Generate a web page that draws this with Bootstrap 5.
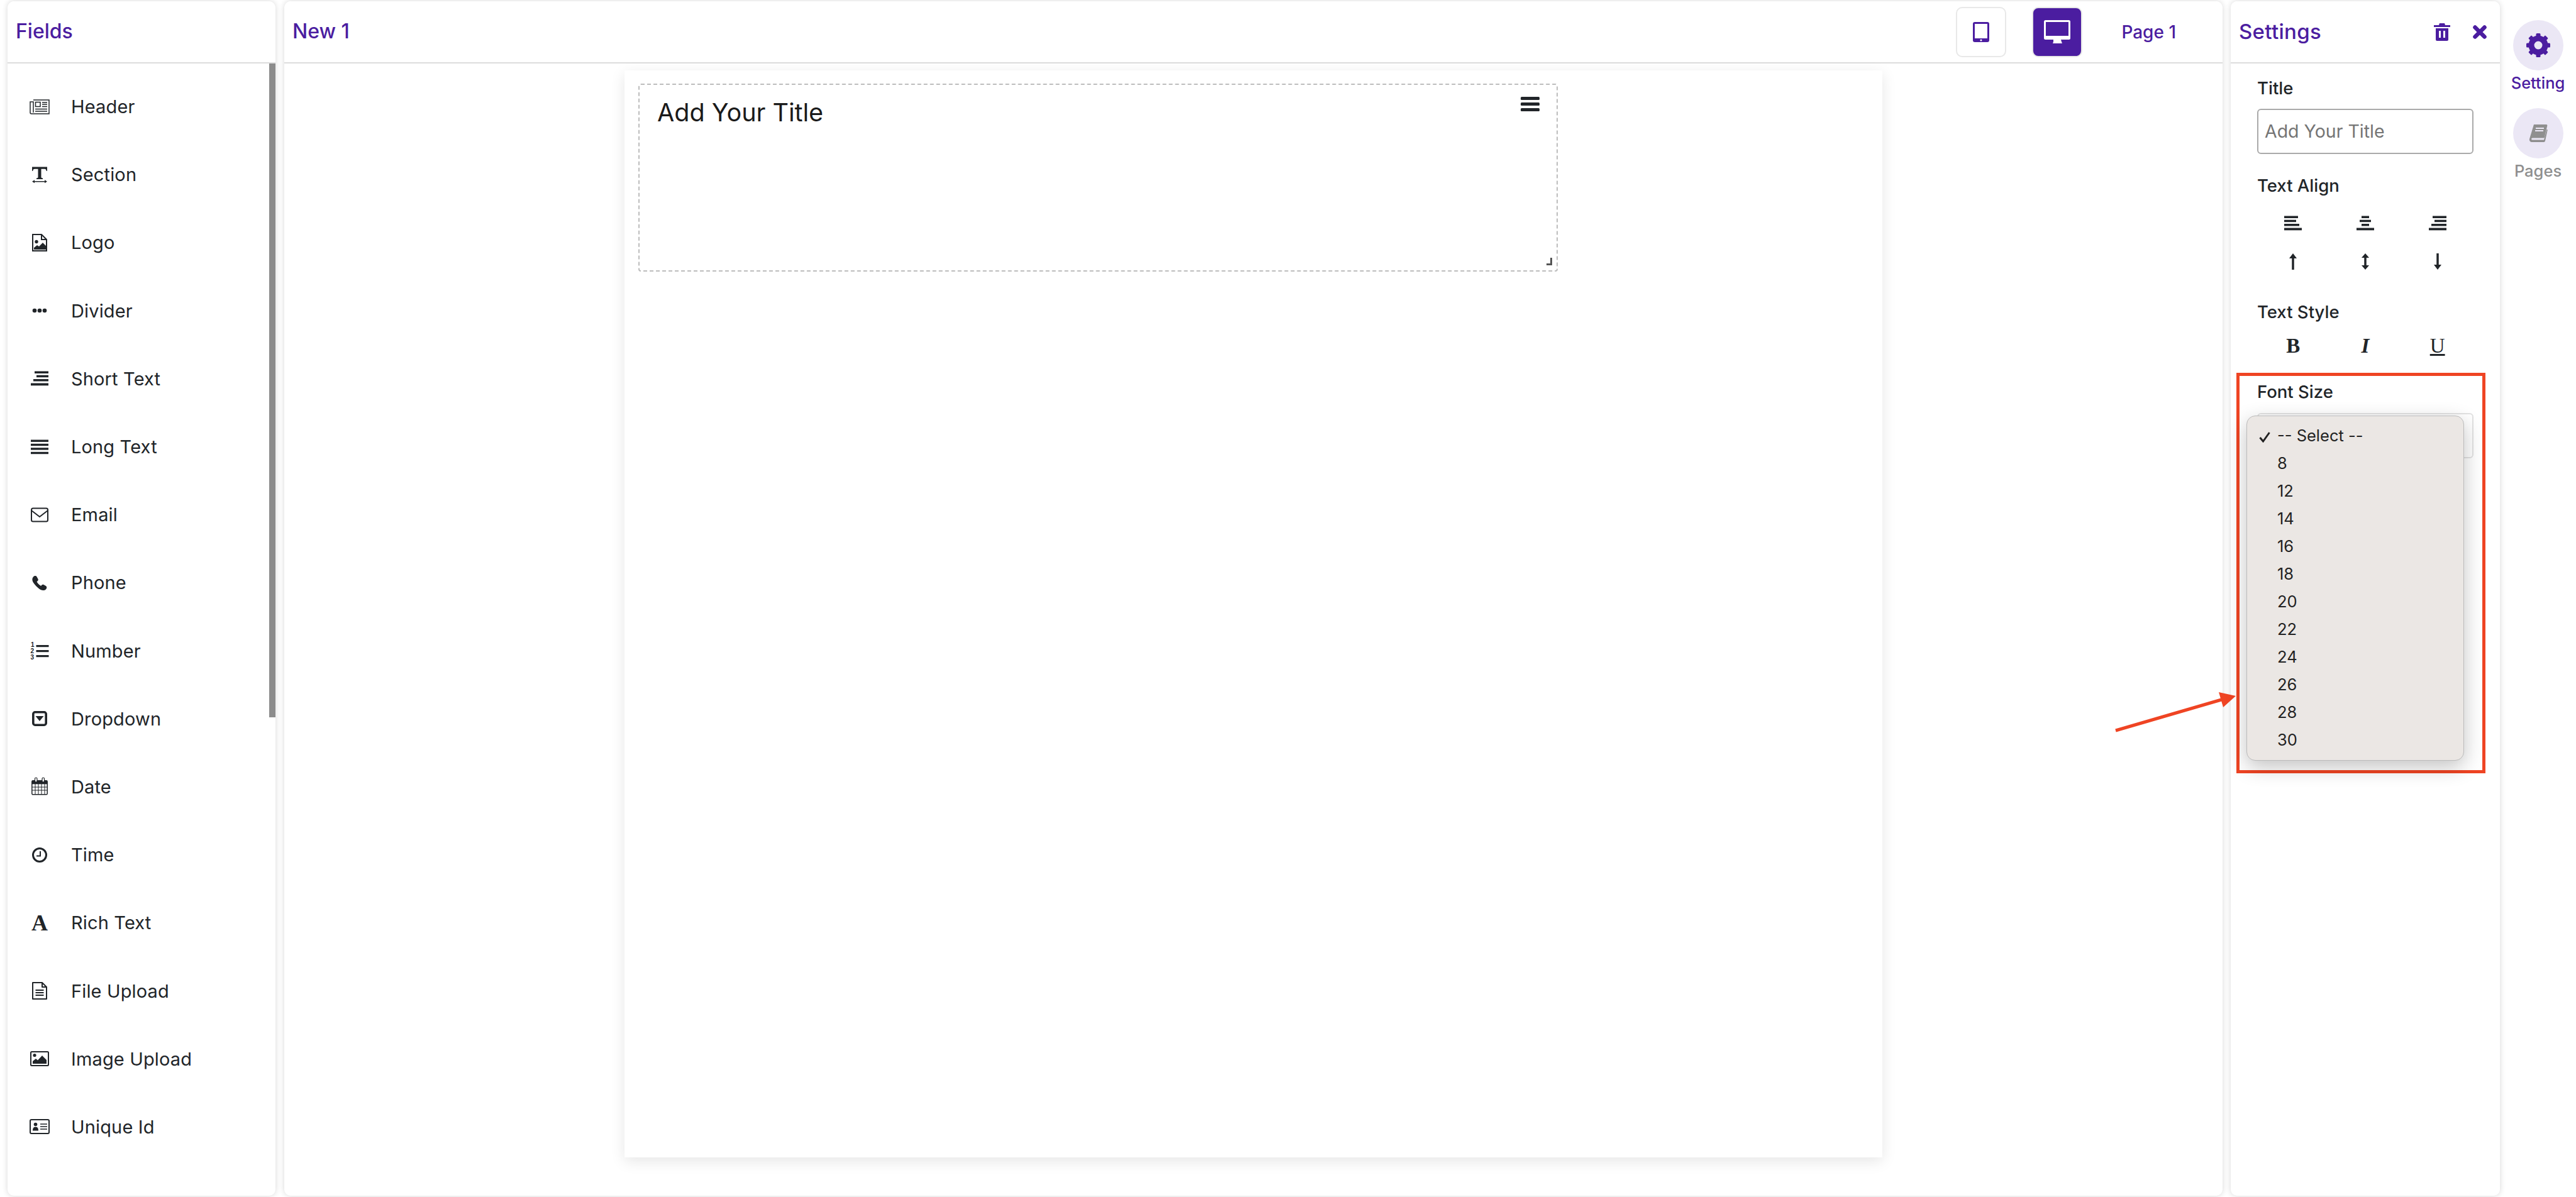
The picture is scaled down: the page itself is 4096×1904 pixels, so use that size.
<!DOCTYPE html>
<html lang="en">
<head>
  <meta charset="UTF-8" />
  <title>Form Builder</title>
  <link href="https://cdn.jsdelivr.net/npm/bootstrap@5.3.3/dist/css/bootstrap.min.css" rel="stylesheet" />
  <style>
    html, body { height: 100%; overflow: hidden; }
    body { background: #fff; color: #212529; font-family: Inter, "Noto Sans", sans-serif; }
    .builder { height: 1904px; padding: 2px 0 2px 12px; }
    .panel.card { flex: none; border: 0; border-radius: 10px; box-shadow: 0 0 10px rgba(0,0,0,.16); overflow: hidden; }
    .panel-fields { width: 426px; }
    .panel-canvas { width: 3082px; margin-left: 14px; }
    .panel-settings { width: 428px; margin-left: 13px; overflow: visible !important; }
    .panel .card-header { background: #fff; padding: 0 13px; border-bottom: 2px solid #ddd; box-sizing: content-box; height: 97px; border-radius: 10px 10px 0 0; }
    .panel-title { color: #4b1da0; font-size: 32px; font-weight: 500; margin: 0; }
    .panel-settings .panel-title { font-size: 33px; letter-spacing: .3px; }

    .field-list { padding-top: 15px; }
    .field-row { height: 108.2px; padding-left: 35px; gap: 34px; font-size: 29px; letter-spacing: .15px; line-height: 1; padding-bottom: 1px; }
    .field-row svg, .field-row .glyph-a { width: 32px; height: 32px; flex: none; }
    .glyph-a { font: bold 36px/32px "Liberation Serif", serif; text-align: center; }
    .fake-scroll { top: 0; right: 0; width: 10px; height: 1040px; background: #8c8c8c; }

    .device-btn { width: 80px; height: 80px; border: 2px solid #e8e8e8; border-radius: 10px; padding: 0; background: #fff; }
    .device-btn.active-device { background: #4b1da0; margin-left: 41px; }
    .page-name { color: #4b1da0; font-size: 28px; font-weight: 500; margin-left: 62px; margin-right: 61px; }
    .page-sheet { width: 2000px; height: 1729px; margin: 11px auto 0; padding: 21px 22px; background: #fff; box-shadow: 0 6px 22px rgba(0,0,0,.1); }
    .title-box { width: 1462px; height: 299px; border: 2px dashed #bdbdbd; border-radius: 4px; padding: 19px 28px; }
    .title-text { font-size: 39.5px; line-height: 50px; margin: 0; color: #1a1a1a; }
    .box-menu { top: 19px; right: 27px; }
    .box-resize { right: 7px; bottom: 8px; width: 9px; height: 12px; border-right: 3px solid #555; border-bottom: 3px solid #555; }

    .act-trash { margin-right: 36px; }
    .act-close { margin-right: 8px; }
    .settings-body { padding: 22px 42px 0; }
    .set-label { font-size: 27.5px; font-weight: 500; height: 36px; line-height: 34px; margin: 0; }
    .set-label.gap-big { margin-top: 33px; }
    .title-input.form-control { height: 72px; margin-top: 14px; padding: 0 10px 2px; font-size: 28.5px; border: 2px solid #aaa; border-radius: 6px; }
    .title-input::placeholder { color: #757575; }
    .tool-row { height: 61px; }
    .tool-row.first-row { margin-top: 10px; }
    .style-row { height: 60px; margin-top: 6px; font: 33px/58px "Liberation Serif", serif; color: #212529; }
    .font-label { margin-top: 25px; }
    .select-wrap { margin-top: 15px; }
    .size-select.form-select { height: 72px; font-size: 26px; border: 2px solid #e2e2e2; border-radius: 6px; }
    .size-menu.dropdown-menu { display: block; position: absolute; top: 4px; left: -17px; width: 346px; height: 549px; padding: 9px 0 0; background: #ebe7e4; border: 1px solid #bbb; border-radius: 14px; box-shadow: 0 10px 32px rgba(0,0,0,.24); }
    .size-menu .dropdown-item { height: 44px; padding: 0 0 0 19px; font-size: 25.5px; color: #222; }
    .tick-slot { width: 29px; flex: none; }

    .side-rail { flex: none; width: 121px; padding-top: 30px; }
    .rail-circle { width: 80px; height: 80px; border-radius: 50%; background: #ebe7f5; }
    .rail-label { font-size: 25.5px; font-weight: 500; line-height: 40px; margin: 0 0 20px; color: #4b1da0; }
    .rail-label.muted-label { color: #8f8f8f; }

    .annot-box { left: 3556px; top: 593px; width: 396px; height: 637px; border: 5px solid #ef4423; pointer-events: none; }
    .annot-arrow { left: 3360px; top: 1090px; }
  </style>
</head>
<body class="position-relative">

  <svg class="d-none">
    <symbol id="i-header" viewBox="0 0 32 32"><g fill="none" stroke="currentColor" stroke-width="1.5"><path d="M6 5h25v22H3a2 2 0 0 1-2-2V8h5v17"/><rect x="9.500" y="8.500" width="7.500" height="7"/><path d="M20 9h8M20 12h8M20 15.500h8M9 19.500h19M9 23h19"/></g></symbol>
    <symbol id="i-section" viewBox="0 0 32 32"><path fill="currentColor" d="M4 3.500h24v6.500h-1.200c-.4-2-1-3.200-3-3.200H18.500V20c0 1 1 1.300 2.500 1.300V23H11v-1.700c1.500 0 2.500-.3 2.500-1.300V6.800H8.200c-2 0-2.600 1.200-3 3.200H4z"/><path fill="none" stroke="currentColor" stroke-width="1.500" d="M6 26.800h20"/><path fill="currentColor" d="M4 26.800l4-2.500v5zM28 26.800l-4-2.500v5z"/></symbol>
    <symbol id="i-logo" viewBox="0 0 32 32"><path fill="none" stroke="currentColor" stroke-width="2" d="M5 3h14l8 8v18H5zM19 3v8h8"/><circle cx="11" cy="14.500" r="2.700" fill="currentColor"/><path fill="currentColor" d="M7 27v-3l5-4 3 2 6-6 5 5v6z"/></symbol>
    <symbol id="i-divider" viewBox="0 0 32 32"><circle cx="8" cy="16" r="3.300" fill="currentColor"/><circle cx="16" cy="16" r="3.300" fill="currentColor"/><circle cx="24" cy="16" r="3.300" fill="currentColor"/></symbol>
    <symbol id="i-right" viewBox="0 0 32 32"><g fill="currentColor"><rect x="8" y="4.500" width="22" height="3.500"/><rect x="11" y="10.700" width="19" height="3.500"/><rect x="6" y="17" width="24" height="3.500"/><rect x="2" y="23.500" width="28" height="3.800"/></g></symbol>
    <symbol id="i-left" viewBox="0 0 32 32"><g fill="currentColor"><rect x="2" y="4.500" width="22" height="3.500"/><rect x="2" y="10.700" width="19" height="3.500"/><rect x="2" y="17" width="24" height="3.500"/><rect x="2" y="23.500" width="28" height="3.800"/></g></symbol>
    <symbol id="i-center" viewBox="0 0 32 32"><g fill="currentColor"><rect x="10" y="4.500" width="12" height="3.500"/><rect x="7" y="10.700" width="18" height="3.500"/><rect x="10" y="17" width="12" height="3.500"/><rect x="2" y="23.500" width="28" height="3.800"/></g></symbol>
    <symbol id="i-justify" viewBox="0 0 32 32"><g fill="currentColor"><rect x="2" y="4.500" width="28" height="3.400"/><rect x="2" y="10.800" width="28" height="3.400"/><rect x="2" y="17.200" width="28" height="3.400"/><rect x="2" y="23.800" width="28" height="3.400"/></g></symbol>
    <symbol id="i-email" viewBox="0 0 32 32"><rect x="3" y="5.500" width="26" height="21" rx="2.500" fill="none" stroke="currentColor" stroke-width="2"/><path d="M3 9l13 10L29 9" fill="none" stroke="currentColor" stroke-width="2"/></symbol>
    <symbol id="i-phone" viewBox="0 0 32 32"><path fill="currentColor" d="M6 6.500c2-2 4.500-1.800 5.500 0l2 3.600c.5 1 .3 2-.5 2.800l-1.500 1.400c1.500 3 3.500 5 6.600 6.600l1.400-1.500c.8-.8 1.800-1 2.800-.5l3.600 2c1.800 1 2 3.500 0 5.500-2 2-5 2.300-8.400.6C13.500 24.500 8 19 5.500 14.900 3.800 11.500 4 8.500 6 6.500z"/></symbol>
    <symbol id="i-number" viewBox="0 0 32 32"><g fill="currentColor"><rect x="10.500" y="7" width="20" height="3.200"/><rect x="10.500" y="15" width="20" height="3.200"/><rect x="10.500" y="23" width="20" height="3.200"/><g font-family="'Liberation Sans',sans-serif" font-weight="700" font-size="10"><text x="2" y="10">1</text><text x="1.500" y="19.500">2</text><text x="1.500" y="29.500">3</text></g></g></symbol>
    <symbol id="i-dropdown" viewBox="0 0 32 32"><rect x="5.800" y="5.800" width="20.400" height="20.400" rx="3" fill="none" stroke="currentColor" stroke-width="3.600"/><path d="M9.500 12h13l-6.500 8z" fill="currentColor"/></symbol>
    <symbol id="i-date" viewBox="0 0 32 32"><rect x="3.800" y="6.800" width="24.400" height="22" rx="1.500" fill="none" stroke="currentColor" stroke-width="1.500"/><path fill="currentColor" d="M4 6.800h24v5.500H4z"/><path fill="none" stroke="currentColor" stroke-width="1" d="M4 17h24M4 22h24M9 12v17M14 12v17M19 12v17M24 12v17"/><rect x="8.500" y="2" width="3.500" height="7" rx="1.700" fill="#fff" stroke="currentColor" stroke-width="1.200"/><rect x="20" y="2" width="3.500" height="7" rx="1.700" fill="#fff" stroke="currentColor" stroke-width="1.200"/></symbol>
    <symbol id="i-time" viewBox="0 0 32 32"><circle cx="16" cy="16" r="10.500" fill="none" stroke="currentColor" stroke-width="3"/><path d="M17 10v7.500h-6" fill="none" stroke="currentColor" stroke-width="2"/></symbol>
    <symbol id="i-file" viewBox="0 0 32 32"><path fill="none" stroke="currentColor" stroke-width="2" stroke-linejoin="round" d="M5 3h15l7 7v19H5zM20 3v7h7"/><path fill="none" stroke="currentColor" stroke-width="1.800" d="M9.500 15h13M9.500 19h13M9.500 23h13"/></symbol>
    <symbol id="i-image" viewBox="0 0 32 32"><rect x="2" y="5" width="28" height="22" rx="1.500" fill="none" stroke="currentColor" stroke-width="2"/><circle cx="8" cy="10.500" r="2.600" fill="currentColor"/><path fill="currentColor" d="M5 24v-4l5-4 3 2.500 7-7.500 7 7v6z"/></symbol>
    <symbol id="i-id" viewBox="0 0 32 32"><rect x="1" y="5" width="30" height="22" rx="2" fill="none" stroke="currentColor" stroke-width="2"/><circle cx="9.500" cy="12.500" r="2.800" fill="currentColor"/><path fill="currentColor" d="M5 22.500c0-5 2-6 4.500-6s4.500 1 4.500 6z"/><path stroke="currentColor" stroke-width="1.600" d="M17 12h11M17 16h11M17 20h11"/></symbol>
  </svg>

  <div class="builder d-flex">

    <!-- Fields -->
    <div class="panel panel-fields card">
      <div class="card-header d-flex align-items-center"><h2 class="panel-title">Fields</h2></div>
      <div class="field-list position-relative flex-grow-1">
        <div class="fake-scroll position-absolute"></div>
        <div class="field-row d-flex align-items-center"><svg><use href="#i-header"/></svg>Header</div>
        <div class="field-row d-flex align-items-center"><svg><use href="#i-section"/></svg>Section</div>
        <div class="field-row d-flex align-items-center"><svg><use href="#i-logo"/></svg>Logo</div>
        <div class="field-row d-flex align-items-center"><svg><use href="#i-divider"/></svg>Divider</div>
        <div class="field-row d-flex align-items-center"><svg><use href="#i-right"/></svg>Short Text</div>
        <div class="field-row d-flex align-items-center"><svg><use href="#i-justify"/></svg>Long Text</div>
        <div class="field-row d-flex align-items-center"><svg><use href="#i-email"/></svg>Email</div>
        <div class="field-row d-flex align-items-center"><svg><use href="#i-phone"/></svg>Phone</div>
        <div class="field-row d-flex align-items-center"><svg><use href="#i-number"/></svg>Number</div>
        <div class="field-row d-flex align-items-center"><svg><use href="#i-dropdown"/></svg>Dropdown</div>
        <div class="field-row d-flex align-items-center"><svg><use href="#i-date"/></svg>Date</div>
        <div class="field-row d-flex align-items-center"><svg><use href="#i-time"/></svg>Time</div>
        <div class="field-row d-flex align-items-center"><span class="glyph-a">A</span>Rich Text</div>
        <div class="field-row d-flex align-items-center"><svg><use href="#i-file"/></svg>File Upload</div>
        <div class="field-row d-flex align-items-center"><svg><use href="#i-image"/></svg>Image Upload</div>
        <div class="field-row d-flex align-items-center"><svg><use href="#i-id"/></svg>Unique Id</div>
      </div>
    </div>

    <!-- Canvas -->
    <div class="panel panel-canvas card">
      <div class="card-header d-flex align-items-center">
        <h2 class="panel-title me-auto">New 1</h2>
        <button class="device-btn btn d-flex align-items-center justify-content-center" type="button">
          <svg width="26" height="32" viewBox="0 0 26 32"><rect width="26" height="32" rx="3" fill="#4b1da0"/><rect x="3" y="3" width="20" height="23" fill="#fff"/><circle cx="13" cy="29" r="1.500" fill="#fff"/></svg>
        </button>
        <button class="device-btn active-device btn d-flex align-items-center justify-content-center" type="button">
          <svg width="42" height="37" viewBox="0 0 42 37"><rect width="42" height="31" rx="2.500" fill="#fff"/><rect x="3" y="3" width="36" height="22" fill="#4b1da0"/><path d="M15 31h12l1 3.500 1 2.500H14l1-2.500z" fill="#fff"/></svg>
        </button>
        <span class="page-name">Page 1</span>
      </div>
      <div class="page-sheet">
        <div class="title-box position-relative">
          <p class="title-text">Add Your Title</p>
          <svg class="box-menu position-absolute" width="30" height="23" viewBox="0 0 30 23"><g fill="#212529"><rect width="30" height="5" rx="1.500"/><rect y="9" width="30" height="5" rx="1.500"/><rect y="18" width="30" height="5" rx="1.500"/></g></svg>
          <span class="box-resize position-absolute"></span>
        </div>
      </div>
    </div>

    <!-- Settings -->
    <div class="panel panel-settings card">
      <div class="card-header d-flex align-items-center">
        <h2 class="panel-title me-auto">Settings</h2>
        <svg width="26" height="28" viewBox="0 0 26 28" class="act-trash"><g fill="#4b1da0"><path d="M9 0h8l1 3h8v3H0V3h8z"/><path fill-rule="evenodd" d="M3 8h20v18a2 2 0 0 1-2 2H5a2 2 0 0 1-2-2zM8 12v11h3V12zM15 12v11h3V12z"/></g></svg>
        <svg width="22" height="22" viewBox="0 0 22 22" class="act-close"><path d="M3.500 3.500l15 15M18.500 3.500l-15 15" stroke="#4b1da0" stroke-width="6.500" stroke-linecap="round"/></svg>
      </div>
      <div class="settings-body">
        <p class="set-label">Title</p>
        <input class="title-input form-control" type="text" placeholder="Add Your Title" />

        <p class="set-label gap-big">Text Align</p>
        <div class="tool-row first-row row g-0 align-items-center text-center">
          <div class="col-4"><svg width="32" height="32"><use href="#i-left"/></svg></div>
          <div class="col-4"><svg width="32" height="32"><use href="#i-center"/></svg></div>
          <div class="col-4"><svg width="32" height="32"><use href="#i-right"/></svg></div>
        </div>
        <div class="tool-row row g-0 align-items-center text-center">
          <div class="col-4"><svg width="14" height="28" viewBox="0 0 14 28"><path d="M7 1l6 8H1z" fill="#212529"/><path d="M7 6v21" stroke="#212529" stroke-width="3.500"/></svg></div>
          <div class="col-4"><svg width="14" height="28" viewBox="0 0 14 28"><path d="M7 1l6 7H1zM7 27l6-7H1z" fill="#212529"/><path d="M7 6v16" stroke="#212529" stroke-width="3.500"/></svg></div>
          <div class="col-4"><svg width="14" height="28" viewBox="0 0 14 28"><path d="M7 27l6-8H1z" fill="#212529"/><path d="M7 1v21" stroke="#212529" stroke-width="3.500"/></svg></div>
        </div>

        <p class="set-label gap-big">Text Style</p>
        <div class="style-row row g-0 text-center">
          <div class="col-4"><b>B</b></div>
          <div class="col-4"><b><i>I</i></b></div>
          <div class="col-4"><u>U</u></div>
        </div>

        <p class="set-label font-label">Font Size</p>
        <div class="select-wrap position-relative">
          <select class="size-select form-select" aria-label="Font Size"><option>-- Select --</option></select>
          <div class="size-menu dropdown-menu">
            <div class="dropdown-item d-flex align-items-center"><span class="tick-slot"><svg width="18" height="18" viewBox="0 0 18 18"><path d="M1.500 10l5 6L16.500 2" fill="none" stroke="#222" stroke-width="3"/></svg></span>-- Select --</div>
            <div class="dropdown-item d-flex align-items-center"><span class="tick-slot"></span>8</div>
            <div class="dropdown-item d-flex align-items-center"><span class="tick-slot"></span>12</div>
            <div class="dropdown-item d-flex align-items-center"><span class="tick-slot"></span>14</div>
            <div class="dropdown-item d-flex align-items-center"><span class="tick-slot"></span>16</div>
            <div class="dropdown-item d-flex align-items-center"><span class="tick-slot"></span>18</div>
            <div class="dropdown-item d-flex align-items-center"><span class="tick-slot"></span>20</div>
            <div class="dropdown-item d-flex align-items-center"><span class="tick-slot"></span>22</div>
            <div class="dropdown-item d-flex align-items-center"><span class="tick-slot"></span>24</div>
            <div class="dropdown-item d-flex align-items-center"><span class="tick-slot"></span>26</div>
            <div class="dropdown-item d-flex align-items-center"><span class="tick-slot"></span>28</div>
            <div class="dropdown-item d-flex align-items-center"><span class="tick-slot"></span>30</div>
          </div>
        </div>
      </div>
    </div>

    <!-- Right rail -->
    <div class="side-rail d-flex flex-column align-items-center">
      <div class="rail-circle d-flex align-items-center justify-content-center">
        <svg width="40" height="40" viewBox="0 0 40 40"><g fill="#4b1da0"><rect x="16.500" y="1" width="7" height="9" rx="1.500"/><rect x="16.500" y="1" width="7" height="9" rx="1.500" transform="rotate(45 20 20)"/><rect x="16.500" y="1" width="7" height="9" rx="1.500" transform="rotate(90 20 20)"/><rect x="16.500" y="1" width="7" height="9" rx="1.500" transform="rotate(135 20 20)"/><rect x="16.500" y="1" width="7" height="9" rx="1.500" transform="rotate(180 20 20)"/><rect x="16.500" y="1" width="7" height="9" rx="1.500" transform="rotate(225 20 20)"/><rect x="16.500" y="1" width="7" height="9" rx="1.500" transform="rotate(270 20 20)"/><rect x="16.500" y="1" width="7" height="9" rx="1.500" transform="rotate(315 20 20)"/></g><circle cx="20" cy="20" r="11" fill="none" stroke="#4b1da0" stroke-width="9"/></svg>
      </div>
      <div class="rail-label">Setting</div>
      <div class="rail-circle d-flex align-items-center justify-content-center">
        <svg width="30" height="30" viewBox="0 0 30 30"><path fill="#8f8f8f" d="M8 1h20c1 0 1.600 1 1.300 2L25 21c-.3 1-1 1.500-2 1.500H6c-1.500 0-2.200 1.200-1.800 2 .3.7 1 1 1.800 1h18l4.500-17 1.300 1L26 27c-.3 1-1 2-2 2H5c-2.500 0-4.500-2-4-5z"/><path d="M11 7h13M10 11h13" stroke="#ebe7f5" stroke-width="1.800"/></svg>
      </div>
      <div class="rail-label muted-label">Pages</div>
    </div>
  </div>

  <!-- Annotation drawn over the screenshot -->
  <div class="annot-box position-absolute"></div>
  <svg class="annot-arrow position-absolute" width="200" height="80" viewBox="0 0 200 80"><path d="M4 72L172 23" stroke="#ef4423" stroke-width="5"/><path d="M195 17L168 11l7 24z" fill="#ef4423"/></svg>

  <script src="https://cdn.jsdelivr.net/npm/bootstrap@5.3.3/dist/js/bootstrap.bundle.min.js"></script>
</body>
</html>
